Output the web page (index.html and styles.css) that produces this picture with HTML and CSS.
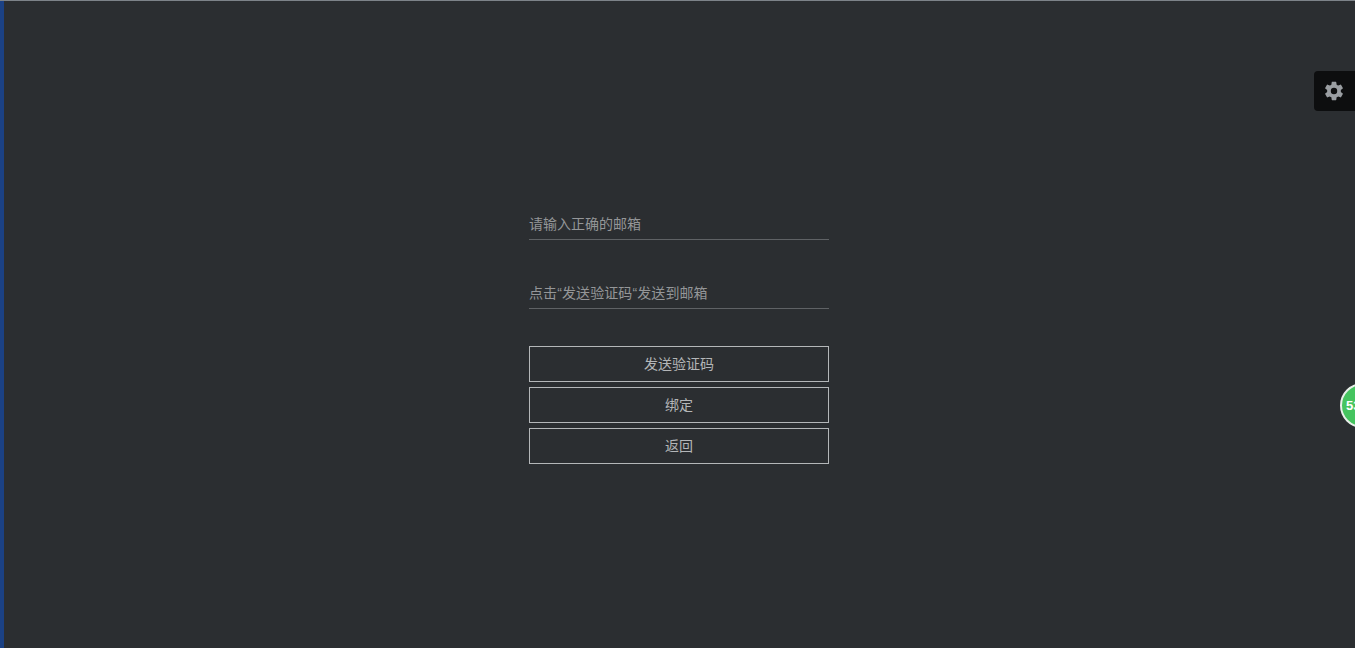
FILE: index.html
```html
<!DOCTYPE html>
<html lang="zh-CN">
<head>
<meta charset="utf-8">
<title>绑定邮箱</title>
<link rel="stylesheet" href="styles.css">
</head>
<body>
<div class="page">
  <div class="strip"></div>
  <main class="main">
    <form class="form">
      <input class="field" type="text" placeholder="请输入正确的邮箱">
      <input class="field field-long" type="text" placeholder="点击“发送验证码“发送到邮箱">
      <div class="actions">
        <button class="btn" type="button">发送验证码</button>
        <button class="btn" type="button">绑定</button>
        <button class="btn" type="button">返回</button>
      </div>
    </form>
  </main>
</div>
<div class="settings">
  <svg class="gear" viewBox="0 0 24 24" width="22" height="22" aria-hidden="true">
    <path fill="#9a9ea2" fill-rule="evenodd" d="M19.43 12.98c.04-.32.07-.64.07-.98s-.03-.66-.07-.98l2.11-1.65c.19-.15.24-.42.12-.64l-2-3.46c-.12-.22-.39-.3-.61-.22l-2.49 1c-.52-.4-1.08-.73-1.69-.98l-.38-2.65A.49.49 0 0 0 14 2h-4c-.25 0-.46.18-.49.42l-.38 2.65c-.61.25-1.17.59-1.69.98l-2.49-1c-.23-.09-.49 0-.61.22l-2 3.46c-.13.22-.07.49.12.64l2.11 1.65c-.04.32-.07.65-.07.98s.03.66.07.98l-2.11 1.65c-.19.15-.24.42-.12.64l2 3.46c.12.22.39.3.61.22l2.49-1c.52.4 1.08.73 1.69.98l.38 2.65c.03.24.24.42.49.42h4c.25 0 .46-.18.49-.42l.38-2.65c.61-.25 1.17-.59 1.69-.98l2.49 1c.23.09.49 0 .61-.22l2-3.46c.12-.22.07-.49-.12-.64l-2.11-1.65zM12 15.5a3.5 3.5 0 1 1 0-7 3.5 3.5 0 0 1 0 7z"/>
  </svg>
</div>
<div class="badge">53</div>
</body>
</html>
```
FILE: styles.css
```css
* { box-sizing: border-box; }
html, body { margin: 0; height: 100%; overflow: hidden; }
body {
  background: #2b2e31;
  font-family: "Liberation Sans", "Noto Sans CJK SC", sans-serif;
  font-size: 14px;
}
.page {
  display: flex;
  height: 100%;
  border-top: 1px solid #7d8389;
}
.strip {
  flex: 0 0 4px;
  background: #1b4184;
}
.main {
  flex: 1;
  display: flex;
  justify-content: flex-start;
  padding: 207px 0 0 525px;
}
.form {
  width: 300px;
  display: flex;
  flex-direction: column;
}
.field {
  display: block;
  width: 100%;
  height: 32px;
  margin-bottom: 37px;
  padding: 0;
  border: 0;
  border-bottom: 1px solid #5f6265;
  background: transparent;
  color: #c4c6c8;
  font: inherit;
  outline: none;
}
.field-long { letter-spacing: 0.1px; }
.field::placeholder { color: #949698; opacity: 1; }
.actions {
  display: flex;
  flex-direction: column;
  gap: 5px;
}
.btn {
  display: block;
  width: 100%;
  height: 36px;
  padding: 0 0 2px;
  border: 1px solid #b4b7b9;
  background: transparent;
  color: #b4b6b8;
  font: inherit;
}
.settings {
  position: absolute;
  top: 71px;
  right: 0;
  width: 41px;
  height: 40px;
  padding-right: 1px;
  display: flex;
  align-items: center;
  justify-content: center;
  background: #0d0e0f;
  border-radius: 4px 0 0 4px;
}
.badge {
  position: absolute;
  top: 383px;
  left: 1340px;
  width: 45px;
  height: 45px;
  padding-left: 4px;
  border: 2px solid #e8efe9;
  border-radius: 50%;
  background: #45c45f;
  color: #fff;
  font-size: 13px;
  font-weight: 700;
  line-height: 41px;
}
```
